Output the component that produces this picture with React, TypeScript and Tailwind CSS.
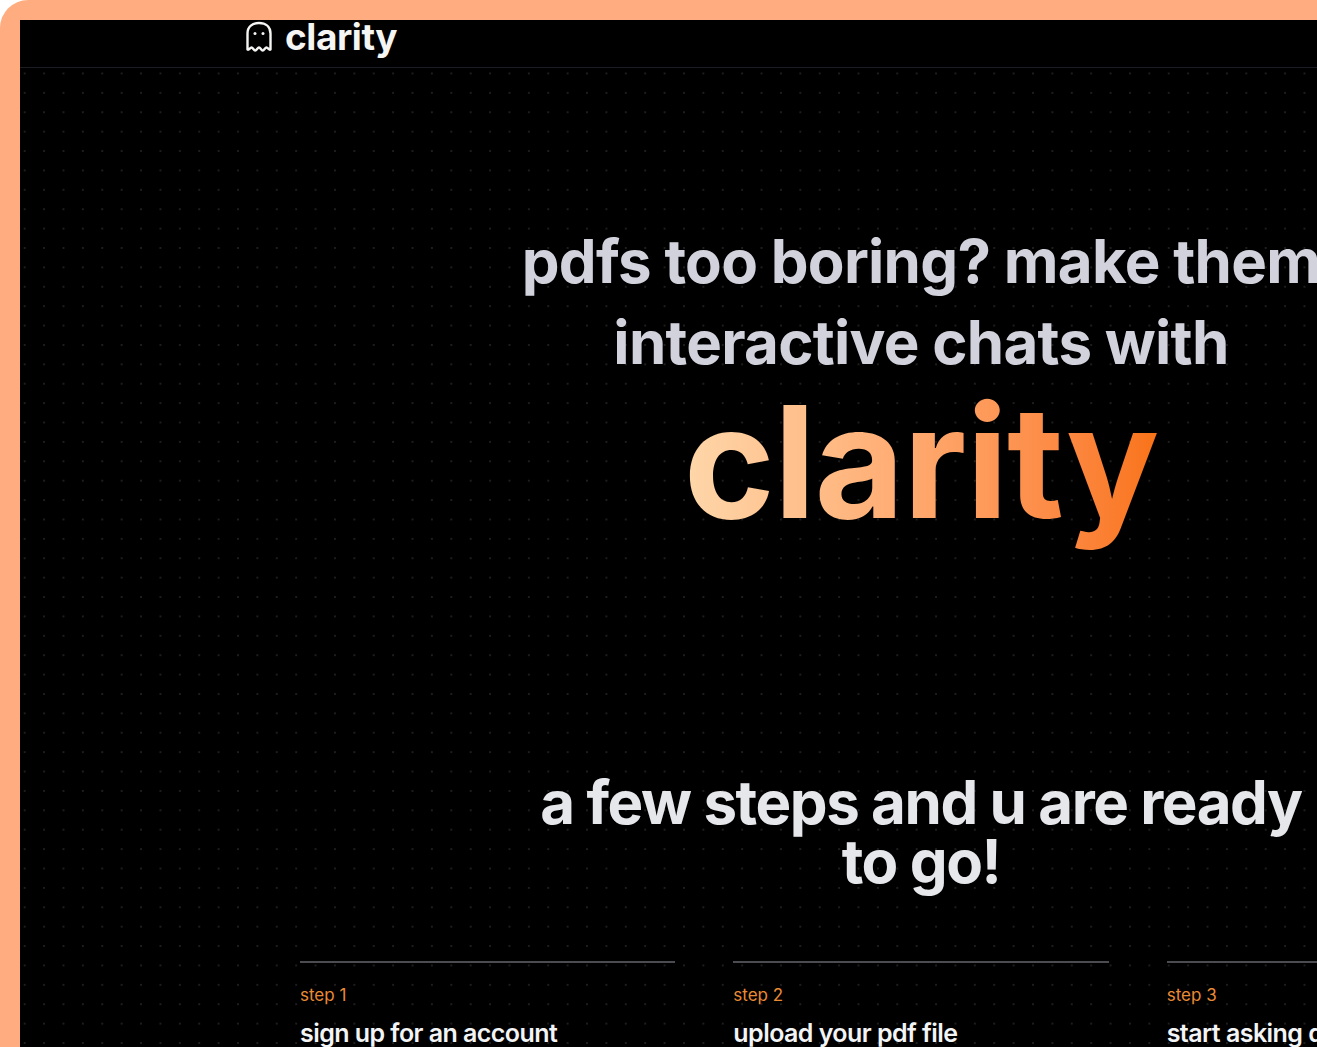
const steps = [
  { n: "step 1", t: "sign up for an account" },
  { n: "step 2", t: "upload your pdf file" },
  { n: "step 3", t: "start asking questions" },
];

function Ghost() {
  return (
    <svg width="28" height="33" viewBox="0 0 28 33" fill="none" stroke="#f5f5f4" strokeWidth="2.4" strokeLinejoin="round" strokeLinecap="round" className="shrink-0">
      <path d="M2.5 29.5V13.5C2.500 6.500 7.500 3 14 3s11.500 3.500 11.500 10.500v16c-1.500 1-2.500-2-4-2s-2.300 3-3.800 3-2.200-3-3.700-3-2.300 3-3.800 3-2.200-3-3.700-3-2.500 3-4 2z" />
      <circle cx="10" cy="13.500" r="1.500" fill="#f5f5f4" stroke="none" />
      <circle cx="18" cy="13.500" r="1.500" fill="#f5f5f4" stroke="none" />
    </svg>
  );
}

export default function App() {
  return (
    <div className="h-[1047px] w-[1317px] overflow-hidden bg-white">
      <div className="h-full w-full overflow-hidden rounded-tl-[28px] bg-[#ffad80] pl-5 pt-5">
        <div className="h-[1100px] w-[1802px] rounded-tl-lg bg-black bg-[radial-gradient(circle,#1e1e1e_1px,transparent_1px)] bg-[length:19.4px_19.4px] bg-[position:-5px_5px] font-['Inter',sans-serif]">
          <header className="h-[48px] border-b border-[#1b1c24] bg-black pl-[225px]">
            <div className="flex h-[32px] items-center gap-[12px]">
              <Ghost />
              <span className="text-[37px] font-bold leading-none tracking-[-0.012em] text-[#f5f5f4]">clarity</span>
            </div>
          </header>

          <main className="flex flex-col items-center">
            <h1 className="mt-[153px] text-center text-[60px] font-[650] leading-[81px] tracking-[-0.012em] whitespace-nowrap text-[#d1d2dc]">
              pdfs too boring? make them
              <br />
              interactive chats with
            </h1>
            <div className="mt-[-6px] bg-gradient-to-r from-[#fed7aa] to-[#f97316] bg-clip-text pb-2 text-[155px] font-[650] leading-[170px] tracking-[-0.008em] text-transparent">
              clarity
            </div>
            <h2 className="mt-[218px] text-center text-[60px] font-[650] leading-[59px] tracking-[-0.024em] whitespace-nowrap text-[#e5e7eb]">
              a few steps and u are ready
              <br />
              to go!
            </h2>
            <div className="mt-[70px] grid w-[1242px] grid-cols-3 gap-x-[58px]">
              {steps.map((s) => (
                <div key={s.n} className="border-t-2 border-[#4b4b52] pt-[20px]">
                  <p className="text-[17px] leading-[24px] tracking-[0em] text-[#ea8a35]">{s.n}</p>
                  <p className="mt-[10px] whitespace-nowrap text-[25px] font-semibold leading-[32px] tracking-[-0.022em] text-[#f3f4f6]">{s.t}</p>
                </div>
              ))}
            </div>
          </main>
        </div>
      </div>
    </div>
  );
}
